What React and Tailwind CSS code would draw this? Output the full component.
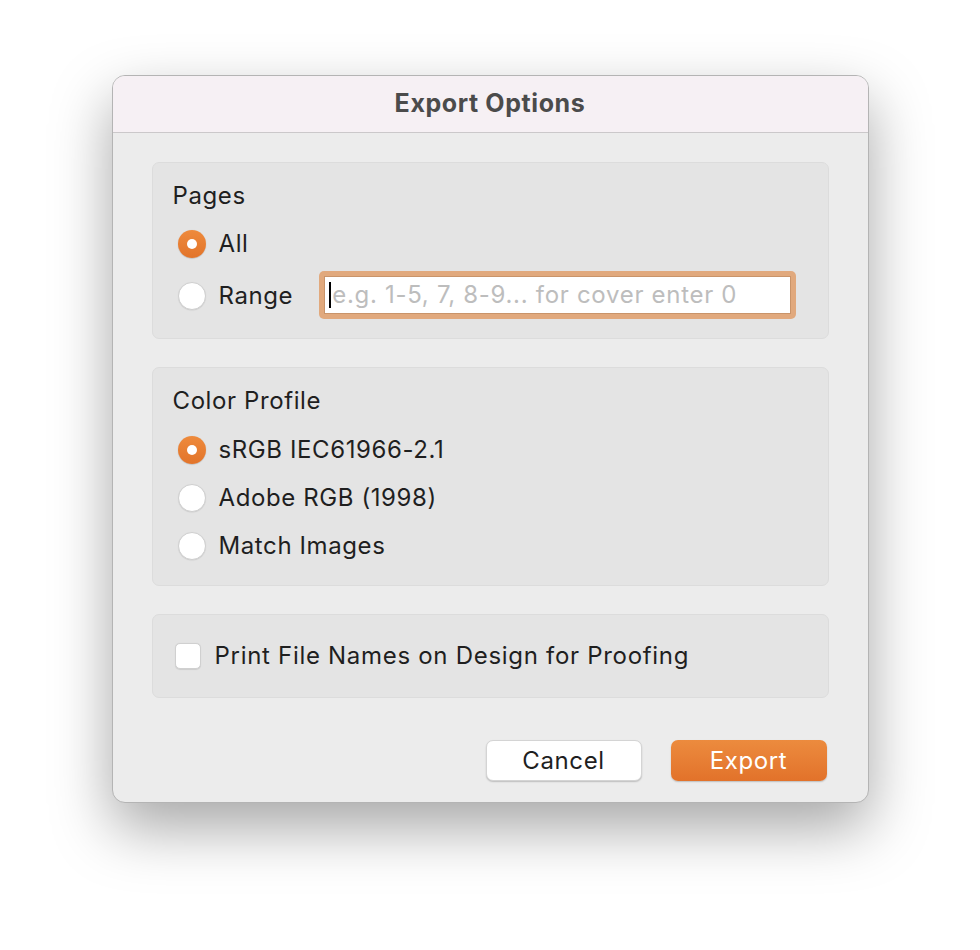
import { useState } from "react";

const Radio = ({ checked, label, onClick }) => (
  <button
    onClick={onClick}
    className="flex items-center gap-[13px] h-[48px] pl-[5px] text-left"
  >
    {checked ? (
      <span className="w-[28px] h-[28px] rounded-full bg-gradient-to-b from-[#ee8a3c] to-[#e2742a] flex items-center justify-center shadow-[0_0.5px_1px_rgba(0,0,0,0.25)]">
        <span className="w-[10px] h-[10px] rounded-full bg-white" />
      </span>
    ) : (
      <span className="w-[28px] h-[28px] rounded-full bg-white border border-[#cfcfcf] shadow-[0_0.5px_1px_rgba(0,0,0,0.1)]" />
    )}
    <span className="text-[24px] tracking-[0.6px] text-[#1f1f1f]">{label}</span>
  </button>
);

const App = () => {
  const [pages, setPages] = useState("all");
  const [profile, setProfile] = useState("srgb");
  const [printNames, setPrintNames] = useState(false);

  return (
    <div className="w-[980px] h-[950px] bg-white flex justify-center pt-[75px] font-['Inter',sans-serif]">
      <div className="w-[757px] h-[728px] rounded-[13px] border border-[#b4b4b4] bg-[#ececec] overflow-hidden shadow-[0_25px_60px_rgba(0,0,0,0.35)] flex flex-col">
        {/* title bar */}
        <div className="h-[57px] shrink-0 bg-[#f6f0f4] border-b border-[#cbc8ca] flex items-center justify-center">
          <h1 className="text-[25px] font-bold text-[#4b4b4b] tracking-[0.6px]">
            Export Options
          </h1>
        </div>

        <div className="flex flex-col px-[39px] pt-[29px]">
          {/* Pages */}
          <div className="h-[177px] rounded-[7px] bg-[#e4e4e4] border border-[#dcdcdc] px-[20px] pt-[17px]">
            <div className="text-[24px] tracking-[0.6px] text-[#1f1f1f] leading-[32px]">
              Pages
            </div>
            <div className="mt-[8px] flex flex-col">
              <Radio
                checked={pages === "all"}
                label="All"
                onClick={() => setPages("all")}
              />
              <div className="flex items-center mt-[4px]">
                <Radio
                  checked={pages === "range"}
                  label="Range"
                  onClick={() => setPages("range")}
                />
                <div className="ml-[26px] w-[477px] h-[48px] rounded-[5px] bg-[#e1a97d] p-[5px] -mt-[3px]">
                  <div className="h-full bg-white border border-[#c9946a] flex items-center pl-[4px]">
                    <span className="w-[2px] h-[26px] bg-black" />
                    <span className="text-[24px] tracking-[0.7px] text-[#bdbdbd] ml-[1px] whitespace-nowrap">
                      e.g. 1-5, 7, 8-9... for cover enter 0
                    </span>
                  </div>
                </div>
              </div>
            </div>
          </div>

          {/* Color Profile */}
          <div className="mt-[28px] h-[219px] rounded-[7px] bg-[#e4e4e4] border border-[#dcdcdc] px-[20px] pt-[17px]">
            <div className="text-[24px] tracking-[0.6px] text-[#1f1f1f] leading-[32px]">
              Color Profile
            </div>
            <div className="mt-[9px] flex flex-col">
              <Radio
                checked={profile === "srgb"}
                label="sRGB IEC61966-2.1"
                onClick={() => setProfile("srgb")}
              />
              <Radio
                checked={profile === "adobe"}
                label="Adobe RGB (1998)"
                onClick={() => setProfile("adobe")}
              />
              <Radio
                checked={profile === "match"}
                label="Match Images"
                onClick={() => setProfile("match")}
              />
            </div>
          </div>

          {/* Print names */}
          <div className="mt-[28px] h-[84px] rounded-[7px] bg-[#e4e4e4] border border-[#dcdcdc] px-[22px] flex items-center">
            <button
              onClick={() => setPrintNames((v) => !v)}
              className="flex items-center gap-[14px]"
            >
              <span className="w-[26px] h-[26px] rounded-[5px] bg-white border border-[#d0d0d0] shadow-[0_0.5px_1px_rgba(0,0,0,0.1)] flex items-center justify-center text-[#e2742a] text-[18px]">
                {printNames ? "✓" : ""}
              </span>
              <span className="text-[24px] tracking-[0.7px] text-[#1f1f1f]">
                Print File Names on Design for Proofing
              </span>
            </button>
          </div>

          {/* buttons */}
          <div className="mt-[42px] flex justify-end gap-[29px] pr-[2px]">
            <button className="w-[156px] h-[41px] rounded-[7px] bg-white border border-[#d4d4d4] shadow-[0_1px_1.5px_rgba(0,0,0,0.2)] text-[24px] tracking-[0.6px] text-[#1f1f1f]">
              Cancel
            </button>
            <button className="w-[156px] h-[41px] rounded-[7px] bg-gradient-to-b from-[#ec8b3e] to-[#e2722a] shadow-[0_1px_1.5px_rgba(0,0,0,0.2)] text-[24px] tracking-[0.6px] text-white">
              Export
            </button>
          </div>
        </div>
      </div>
    </div>
  );
};

export default App;
